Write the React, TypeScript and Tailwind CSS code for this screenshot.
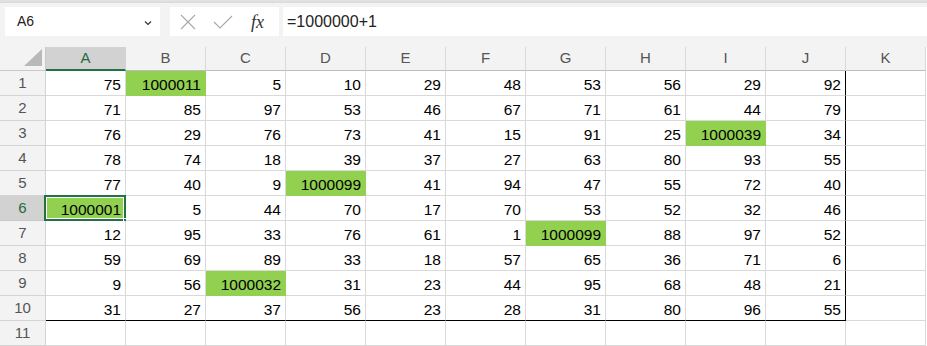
import React from "react";

const cols = ["A", "B", "C", "D", "E", "F", "G", "H", "I", "J", "K"];

const data: number[][] = [
  [75, 1000011, 5, 10, 29, 48, 53, 56, 29, 92],
  [71, 85, 97, 53, 46, 67, 71, 61, 44, 79],
  [76, 29, 76, 73, 41, 15, 91, 25, 1000039, 34],
  [78, 74, 18, 39, 37, 27, 63, 80, 93, 55],
  [77, 40, 9, 1000099, 41, 94, 47, 55, 72, 40],
  [1000001, 5, 44, 70, 17, 70, 53, 52, 32, 46],
  [12, 95, 33, 76, 61, 1, 1000099, 88, 97, 52],
  [59, 69, 89, 33, 18, 57, 65, 36, 71, 6],
  [9, 56, 1000032, 31, 23, 44, 95, 68, 48, 21],
  [31, 27, 37, 56, 23, 28, 31, 80, 96, 55],
];

function Toolbar() {
  return (
    <div className="h-[47px] bg-[#f3f3f3]">
      <div className="h-[3px] bg-gradient-to-b from-[#e4e4e4] to-[#d9d9d9]" />
      <div className="flex items-start pt-[4px]">
        <div className="ml-[5px] flex h-[29px] w-[155px] items-center justify-between bg-white pl-[12px] pr-[8px]">
          <span className="text-[14px] text-[#222]">A6</span>
          <svg width="8" height="6" viewBox="0 0 8 6" className="mt-[2px]">
            <path d="M1 1.5 L4 4.5 L7 1.5" fill="none" stroke="#333" strokeWidth="1.2" />
          </svg>
        </div>
        <div className="ml-[10px] flex h-[29px] w-[109px] items-center bg-white">
          <svg width="16" height="16" viewBox="0 0 16 16" className="ml-[10px]">
            <path d="M1 1 L15 15 M15 1 L1 15" stroke="#a8a8a8" strokeWidth="1.1" />
          </svg>
          <svg width="20" height="14" viewBox="0 0 20 14" className="ml-[17px]">
            <path d="M1 7 L7 13 L19 1" fill="none" stroke="#a8a8a8" strokeWidth="1.1" />
          </svg>
          <span className="ml-[18px] font-['Liberation_Serif',serif] text-[18px] italic leading-none text-[#333]">fx</span>
        </div>
        <div className="ml-[4px] flex h-[29px] flex-1 items-center bg-white pl-[4px]">
          <span className="text-[16px] text-[#222]">=1000000+1</span>
        </div>
      </div>
    </div>
  );
}

function HeaderRow() {
  return (
    <div className="flex h-[24px]">
      <div className="flex w-[46px] items-end justify-end border-r border-b border-[#c8c8c8] bg-[#f3f3f3] pr-[3px] pb-[4px]">
        <svg width="18" height="17" viewBox="0 0 18 17">
          <polygon points="18,0 18,17 0,17" fill="#b9b9b9" />
        </svg>
      </div>
      {cols.map((c) =>
        c === "A" ? (
          <div key={c} className="flex w-[80px] items-center justify-center border-r border-b-2 border-r-[#d4d4d4] border-b-[#217346] bg-[#d2d2d2] text-[15px] text-[#1e6b40]">
            {c}
          </div>
        ) : (
          <div key={c} className="flex w-[80px] items-center justify-center border-r border-b border-r-[#d9d9d9] border-b-[#bdbdbd] bg-[#f3f3f3] text-[15px] text-[#555]">
            {c}
          </div>
        ),
      )}
    </div>
  );
}

function Cell({ value, row, col }: { value?: number; row: number; col: number }) {
  const green = value !== undefined && value > 1000000;
  const inRange = col < 10 && row < 10;
  const rightBlack = col === 9 && row < 10;
  const bottomBlack = row === 9 && col < 10;
  const selected = row === 5 && col === 0;

  const borderR = rightBlack ? "border-r-black" : green ? "border-r-[#92d050]" : "border-r-[#d9d9d9]";
  const borderB = bottomBlack ? "border-b-black" : green ? "border-b-[#92d050]" : "border-b-[#d9d9d9]";

  return (
    <div className={`relative h-[25px] w-[80px] border-r border-b pt-[3px] pr-[4px] text-right text-[15.5px] leading-[21px] text-black ${borderR} ${borderB} ${green ? "bg-[#92d050]" : "bg-white"}`}>
      {inRange ? value : null}
      {selected && (
        <>
          <div className="absolute top-[-1px] right-[-1px] bottom-[-1px] left-[-2px] border-2 border-[#217346] shadow-[inset_0_0_0_1px_white]" />
          <div className="absolute right-[-4px] bottom-[-4px] h-[6px] w-[6px] border border-white bg-[#217346]" />
        </>
      )}
    </div>
  );
}

function DataRow({ row }: { row: number }) {
  const selected = row === 5;
  const values = data[row] ?? [];
  return (
    <div className="flex">
      <div
        className={`flex h-[25px] w-[46px] items-center justify-center border-b border-r text-[15px] ${
          selected ? "border-r-[#217346] border-b-[#c8c8c8] bg-[#d2d2d2] text-[#1e6b40]" : "border-[#d4d4d4] bg-[#f3f3f3] text-[#555]"
        }`}
      >
        {row + 1}
      </div>
      {cols.map((c, i) => (
        <Cell key={c} row={row} col={i} value={values[i]} />
      ))}
    </div>
  );
}

export default function App() {
  return (
    <div className="h-[346px] w-[927px] overflow-hidden bg-white font-['Liberation_Sans',Arial,sans-serif]">
      <Toolbar />
      <HeaderRow />
      {Array.from({ length: 11 }, (_, r) => (
        <DataRow key={r} row={r} />
      ))}
    </div>
  );
}
